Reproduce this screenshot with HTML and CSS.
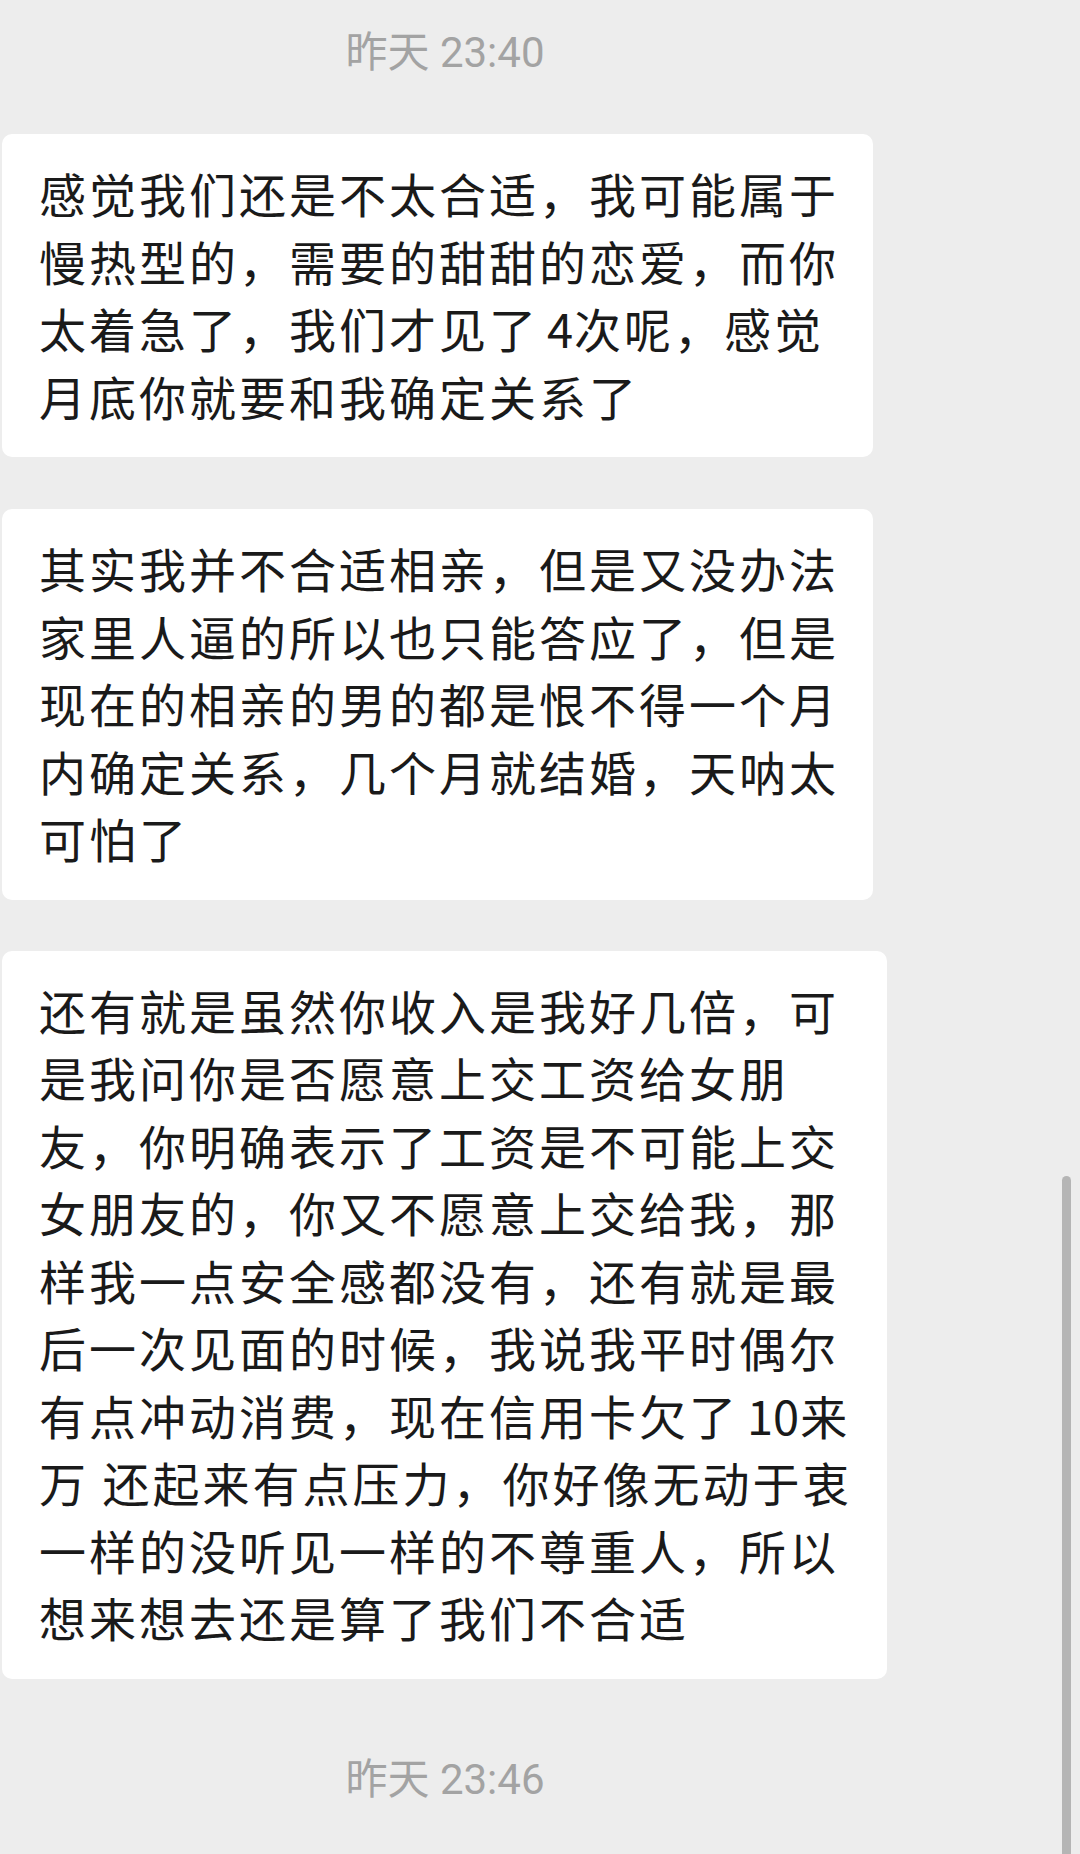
FILE: index.html
```html
<!DOCTYPE html>
<html lang="zh-CN">
<head>
<meta charset="utf-8">
<title>聊天记录</title>
<link rel="stylesheet" href="styles.css">
</head>
<body>
<div class="chat">
  <div class="time">昨天 23:40</div>

  <div class="bubble b1">感觉我们还是不太合适，我可能属于<br>慢热型的，需要的甜甜的恋爱，而你<br>太着急了，我们才见了<span class="num">4</span>次呢，感觉<br>月底你就要和我确定关系了</div>

  <div class="bubble b2">其实我并不合适相亲，但是又没办法<br>家里人逼的所以也只能答应了，但是<br>现在的相亲的男的都是恨不得一个月<br>内确定关系，几个月就结婚，天呐太<br>可怕了</div>

  <div class="bubble b3">还有就是虽然你收入是我好几倍，可<br>是我问你是否愿意上交工资给女朋<br>友，你明确表示了工资是不可能上交<br>女朋友的，你又不愿意上交给我，那<br>样我一点安全感都没有，还有就是最<br>后一次见面的时候，我说我平时偶尔<br>有点冲动消费，现在信用卡欠了<span class="num">10</span>来<br>万 还起来有点压力，你好像无动于衷<br>一样的没听见一样的不尊重人，所以<br>想来想去还是算了我们不合适</div>

  <div class="time time-end">昨天 23:46</div>
</div>
<div class="scrollbar"></div>
</body>
</html>
```

FILE: styles.css
```css
html, body {
  margin: 0;
  padding: 0;
}

body {
  width: 1080px;
  height: 1854px;
  overflow: hidden;
  background: #ededed;
  position: relative;
  font-family: "Noto Sans CJK SC", "Noto Sans", sans-serif;
}

.chat {
  display: flex;
  flex-direction: column;
  align-items: flex-start;
  padding-top: 28px;
}

.time {
  width: 890px;
  text-align: center;
  font-family: Roboto, "Noto Sans CJK SC", sans-serif;
  font-size: 42px;
  line-height: 50px;
  color: #a3a3a3;
}

.bubble {
  margin-left: 2px;
  background: #ffffff;
  border-radius: 10px;
  padding: 25px 34px 28px 37px;
  font-size: 47px;
  line-height: 67.5px;
  letter-spacing: 3px;
  color: #1a1a1a;
  white-space: nowrap;
}

/* latin digits sit a little apart from the CJK around them */
.num {
  margin: 0 1px 0 8px;
  letter-spacing: 0;
}

.b1 {
  margin-top: 56px;
}

.b2 {
  margin-top: 52px;
}

.b3 {
  margin-top: 51px;
}

.time-end {
  margin-top: 76px;
}

/* overlay scroll indicator on the right edge */
.scrollbar {
  position: absolute;
  left: 1062px;
  top: 1176px;
  width: 9px;
  bottom: 0;
  border-radius: 5px 5px 0 0;
  background: #b5b5b5;
}
```
